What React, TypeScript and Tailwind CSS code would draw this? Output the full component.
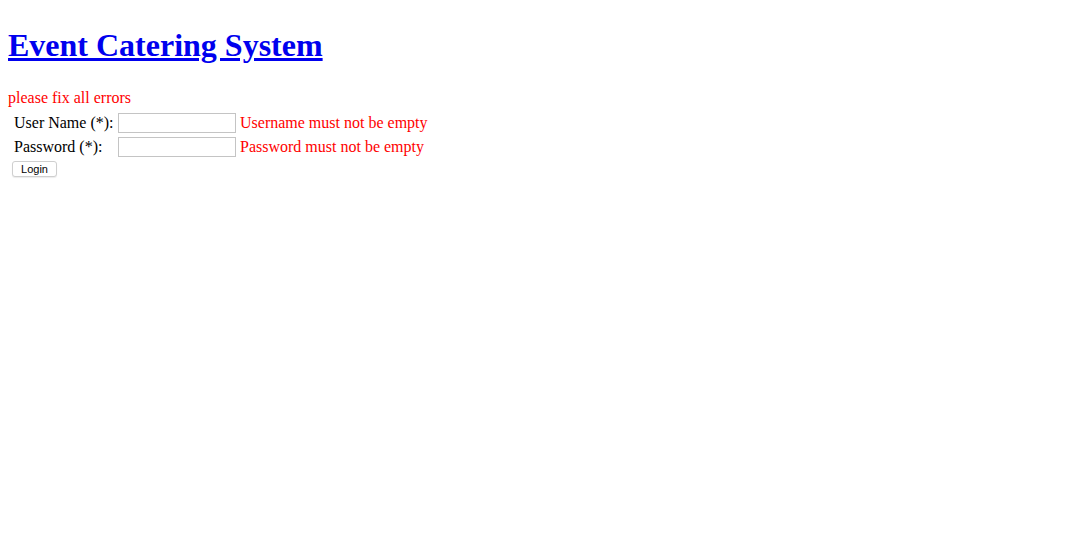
export default function App() {
  return (
    <div className="min-h-screen bg-white p-2 font-['Liberation_Serif','Times_New_Roman',serif] text-black">
      <h1 className="mb-[25px] mt-[19px] text-[32px] font-bold leading-[37px]">
        <a href="#" className="text-[#0000ee] underline">
          Event Catering System
        </a>
      </h1>
      <div className="text-[16px] leading-[18px] text-[#ff0000]">please fix all errors</div>

      <form className="mt-[6px] grid grid-cols-[100px_auto] items-center gap-x-[4px] gap-y-[4px] pl-[6px] text-[16px] leading-[18px]">
        <label htmlFor="username">User Name (*):</label>
        <div className="flex items-center gap-[4px]">
          <input
            id="username"
            type="text"
            className="h-[20px] w-[118px] border border-[#c4c4c4] bg-white px-1 text-[13px] outline-none"
          />
          <span className="text-[#ff0000]">Username must not be empty</span>
        </div>

        <label htmlFor="password">Password (*):</label>
        <div className="flex items-center gap-[4px]">
          <input
            id="password"
            type="password"
            className="h-[20px] w-[118px] border border-[#c4c4c4] bg-white px-1 text-[13px] outline-none"
          />
          <span className="text-[#ff0000]">Password must not be empty</span>
        </div>

        <div className="col-span-2 -ml-[2px] -mt-[2px]">
          <button
            type="submit"
            className="h-[16px] w-[45px] rounded-[3px] border border-[#cfcfcf] bg-white font-['Liberation_Sans',Arial,sans-serif] text-[11px] leading-[14px] text-black shadow-[0_1px_1px_rgba(0,0,0,0.08)]"
          >
            Login
          </button>
        </div>
      </form>
    </div>
  )
}
